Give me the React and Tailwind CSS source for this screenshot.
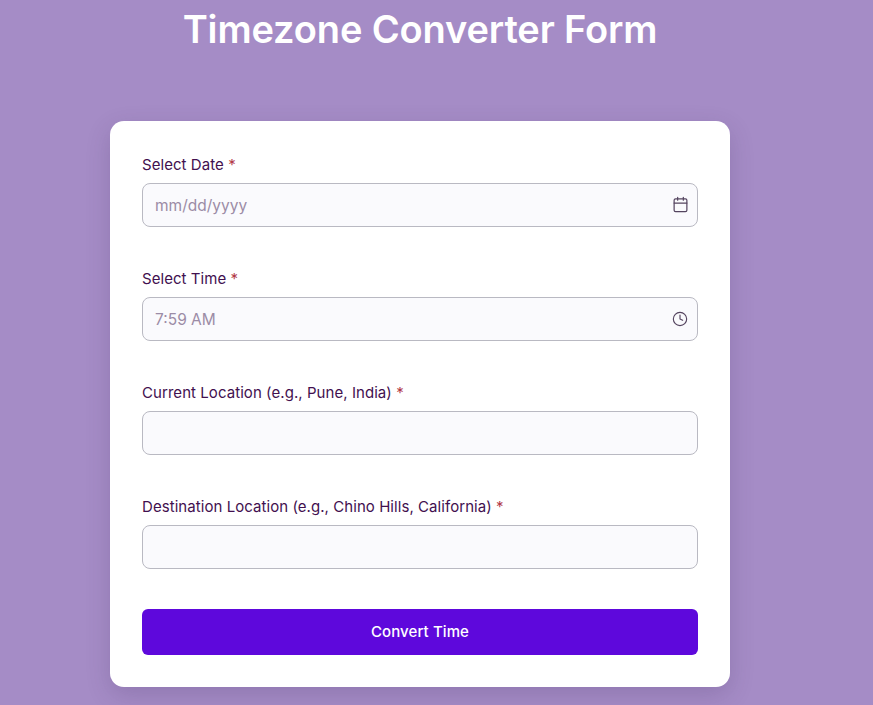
import React from 'react';
import { Calendar, Clock } from 'lucide-react';

const font = "font-['Inter','Liberation_Sans',sans-serif]";

const Field = ({ label, placeholder, icon: Icon, iconClass }) => (
  <div>
    <label className="block h-[20px] mb-[8px] text-[15px] leading-[20px] text-[#42104f] tracking-[0.06px]">
      {label} <span className="text-[#b23a48]">*</span>
    </label>
    <div className="relative">
      <input
        type="text"
        placeholder={placeholder}
        className="block w-full h-[44px] px-[12px] rounded-[8px] border border-[#b9b9c2] bg-[#fafafd] text-[15.5px] outline-none placeholder:text-[#9c8ca6]"
      />
      {Icon && <Icon className={`absolute text-[#54445f] ${iconClass}`} strokeWidth={1.7} />}
    </div>
  </div>
);

export default function App() {
  return (
    <div className={`min-h-[705px] bg-[#a58cc6] pr-[33px] flex flex-col items-center overflow-hidden ${font}`}>
      <h1 className="mt-[5px] mb-[68px] h-[48px] text-[38px] leading-[48px] font-semibold text-white tracking-[-0.14px]">
        Timezone Converter Form
      </h1>
      <form className="w-[620px] h-[566px] bg-white rounded-[14px] px-[32px] pt-[34px] shadow-[0_8px_24px_rgba(60,40,90,0.2)]">
        <div className="flex flex-col gap-[42px]">
          <Field
            label="Select Date"
            placeholder="mm/dd/yyyy"
            icon={Calendar}
            iconClass="right-[9px] top-[13px] w-[17px] h-[17px]"
          />
          <Field
            label="Select Time"
            placeholder="7:59 AM"
            icon={Clock}
            iconClass="right-[10px] top-[14px] w-[16px] h-[16px]"
          />
          <Field label="Current Location (e.g., Pune, India)" />
          <Field label="Destination Location (e.g., Chino Hills, California)" />
        </div>
        <button
          type="button"
          className="block w-full h-[46px] mt-[40px] rounded-[6px] bg-[#5e08dc] text-white text-[15px] font-medium tracking-[0.1px]"
        >
          Convert Time
        </button>
      </form>
    </div>
  );
}
